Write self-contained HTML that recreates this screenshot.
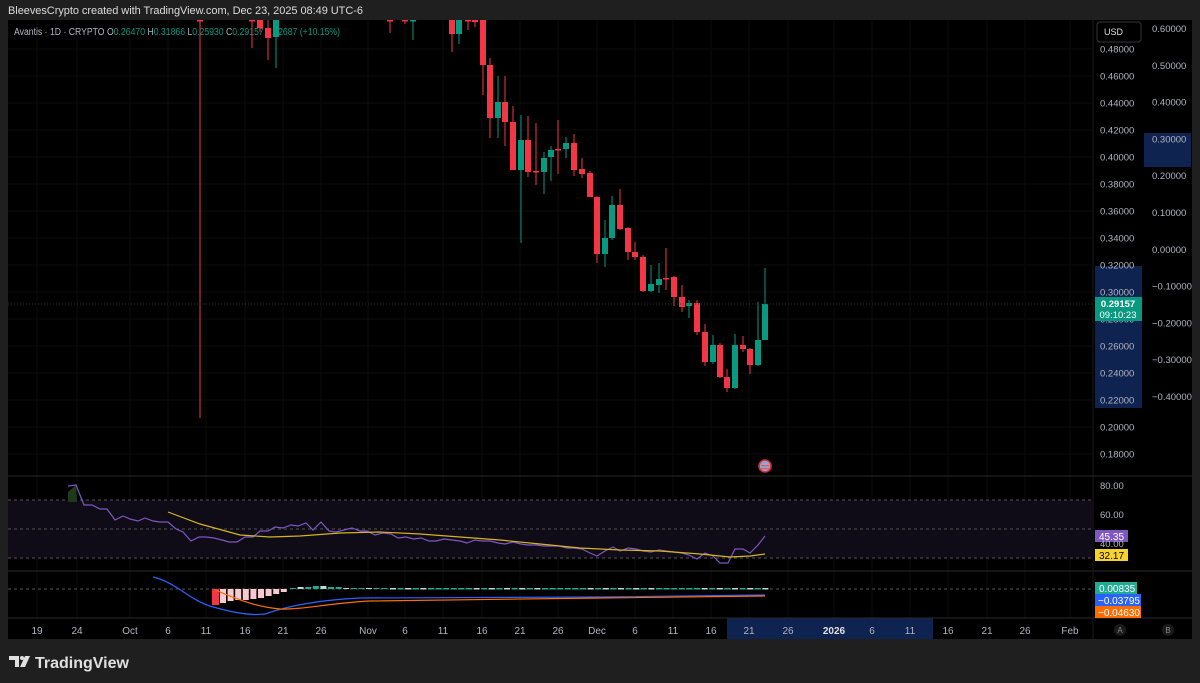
<!DOCTYPE html>
<html><head><meta charset="utf-8"><style>
html,body{margin:0;padding:0;background:#1f1f1f;width:1200px;height:683px;overflow:hidden;font-family:"Liberation Sans",sans-serif}
svg text{font-family:"Liberation Sans",sans-serif}
</style></head><body>
<svg id="s" width="1200" height="683" xmlns="http://www.w3.org/2000/svg">
<rect x="0" y="0" width="1200" height="683" fill="#1f1f1f"/>
<text x="8" y="14" fill="#dcdcdc" font-size="11" textLength="355">BleevesCrypto created with TradingView.com, Dec 23, 2025 08:49 UTC-6</text>
<rect x="8" y="20" width="1184" height="619" fill="#000"/>
<g id="g"></g>
</svg>
<script>
const g=document.getElementById('g');let h='';
function r(x,y,w,hh,f,extra){h+=`<rect x="${x}" y="${y}" width="${w}" height="${hh}" fill="${f}" ${extra||''}/>`}
function l(x1,y1,x2,y2,c,w,extra){h+=`<line x1="${x1}" y1="${y1}" x2="${x2}" y2="${y2}" stroke="${c}" stroke-width="${w||1}" ${extra||''}/>`}
function t(x,y,s,c,fs,anc,extra){h+=`<text x="${x}" y="${y}" fill="${c}" font-size="${fs||10}" text-anchor="${anc||'start'}" ${extra||''}>${s}</text>`}
r(727,618,206,21,'#0e2350');
r(1095,266,47,142,'#0e2350');
r(1144,133,47,34,'#0e2350');
const tx=[[37,'19'],[77,'24'],[130,'Oct'],[168,'6'],[206,'11'],[245,'16'],[283,'21'],[321,'26'],[368,'Nov'],[405,'6'],[443,'11'],[482,'16'],[520,'21'],[558,'26'],[597,'Dec'],[635,'6'],[673,'11'],[711,'16'],[749,'21'],[788,'26'],[834,'2026'],[872,'6'],[910,'11'],[948,'16'],[987,'21'],[1025,'26'],[1070,'Feb']];
tx.forEach(a=>{l(a[0],20,a[0],618,'#0b0b0b',1);t(a[0],634,a[1],a[1]=='2026'?'#e0e0e0':'#b2b5be',10,'middle',a[1]=='2026'?'font-weight="bold"':'')});
for(let i=0;i<16;i++){const p=0.48-0.02*i;const y=49+i*27;l(8,y,1092,y,'#0b0b0b',1);t(1100,y+3.5,p.toFixed(5),'#b2b5be',9.5)}
for(let i=0;i<11;i++){const p=0.6-0.1*i;const y=32+i*36.8;t(1152,y,(p<-0.001?'−':'')+Math.abs(p).toFixed(5),'#b2b5be',9.5)}
r(1097,22,44,20,'#000','stroke="#333" rx="3"');t(1104,35,'USD','#dcdcdc',9);
l(8,476,1192,476,'#2a2a2a',1);l(8,571,1192,571,'#2a2a2a',1);l(8,618,1192,618,'#2a2a2a',1);l(1093,20,1093,639,'#1a1a1a',1);
h+=`<text x="14" y="35" font-size="10" fill="#b2b5be" textLength="326" lengthAdjust="spacingAndGlyphs">Avantis · 1D · CRYPTO <tspan>O</tspan><tspan fill="#089981">0.26470</tspan>  H<tspan fill="#089981">0.31866</tspan>  L<tspan fill="#089981">0.25930</tspan>  C<tspan fill="#089981">0.29157  0.02687 (+10.15%)</tspan></text>`;
const R='#f23645',G='#089981';
const c=[
[200,20,21,20,418],[252,20,21,20,48],[260,20,28,20,32],[268,28,38,20,60],[276,37,20,20,68],
[390,20,21,20,33],[405,20,21,20,24],[413,21,20,20,40],
[452,20,34,20,52],[459,34,20,20,44],[468,20,21,20,30],[475,20,22,20,27],[483,20,65,20,95],
[490,65,118,58,138],[498,118,102,76,138],[505,102,122,76,146],[513,122,170,106,170],[521,170,140,115,243],[528,140,172,116,177],[536,171,172,123,185],[544,172,158,152,194],[551,157,150,146,181],[558,149,149,120,174],[566,149,143,137,158],[574,143,170,134,176],[582,169,174,158,178],[590,173,197,171,197],
[597,197,254,196,263],[605,254,238,220,267],[612,238,205,196,240],[620,205,229,189,230],[628,228,252,227,260],[635,252,257,242,260],[643,257,291,255,292],[651,291,284,265,292],[659,285,279,263,293],[666,278,279,248,290],[674,277,297,276,306],[682,297,307,285,312],[689,306,303,300,318],[697,303,332,300,335],[705,332,362,324,366],[713,362,345,335,364],[720,345,377,343,378],[727,377,388,369,392],[735,388,345,334,389],[743,345,349,336,352],[750,349,365,348,374],[758,365,340,302,366],[765,340,304,268,340]];
c.forEach(k=>{const [x,o,cl,hi,lo]=k;const col=cl<o?G:R;l(x,hi,x,lo,col,1);const top=Math.min(o,cl),bh=Math.max(1.5,Math.abs(cl-o));r(x-3,top,6,bh,col)});
l(8,304,1093,304,'#1e3a35',1,'stroke-dasharray="1 2"');
r(1095,297,47,24,'#089981');t(1118,307,'0.29157','#fff',9.5,'middle','font-weight="bold"');t(1118,318,'09:10:23','#fff',9.5,'middle');
h+=`<circle cx="765" cy="466" r="6" fill="#8fa7d8" stroke="#d32f2f" stroke-width="1.6"/><rect x="761" y="465" width="8" height="1.3" fill="#e55"/><rect x="761" y="468" width="8" height="1.3" fill="#e55"/>`;
r(8,500,1085,58,'#0f0b17');
[500,529,558].forEach(y=>l(8,y,1092,y,'#555',1,'stroke-dasharray="3 3"'));
h+=`<path d="M68,492 L76,485 L77,502 L68,502 Z" fill="#1d3a1d"/>`;
const rsi=[[68,486],[76,485],[84,505],[92,505],[100,509],[107,509],[115,520],[123,516],[130,519],[138,521],[145,518],[153,521],[160,522],[168,522],[176,529],[183,532],[191,541],[199,537],[206,537],[214,538],[222,540],[229,542],[237,542],[245,537],[253,537],[260,531],[268,531],[275,527],[283,528],[291,525],[298,526],[306,523],[313,530],[321,522],[329,531],[336,532],[344,530],[352,528],[360,531],[367,531],[375,535],[383,533],[391,534],[398,538],[406,537],[414,539],[421,538],[429,541],[436,541],[444,539],[452,540],[460,541],[467,543],[475,540],[482,541],[490,541],[498,543],[505,544],[513,542],[521,544],[528,545],[536,545],[544,546],[551,546],[559,546],[567,548],[574,548],[582,549],[590,553],[597,556],[605,551],[613,547],[620,551],[628,548],[636,549],[643,551],[651,552],[659,550],[666,551],[674,552],[682,553],[689,555],[697,559],[705,553],[713,556],[720,563],[728,563],[735,549],[743,549],[750,553],[758,545],[765,536]];
h+=`<polyline points="${rsi.map(p=>p.join(',')).join(' ')}" fill="none" stroke="#7e57c2" stroke-width="1.2"/>`;
h+=`<polyline points="168,512 200,524 240,535 270,537 300,536 340,533 380,532 420,534 460,537 500,540 540,544 580,548 620,550 660,551 700,554 730,557 750,556 765,554" fill="none" stroke="#d4b422" stroke-width="1.2"/>`;
t(1100,489,'80.00','#b2b5be',9.5);t(1100,518,'60.00','#b2b5be',9.5);
r(1095,530,33,12,'#7e57c2');t(1099,540,'45.35','#fff',10);t(1100,547,'40.00','#b2b5be',9.5);
r(1095,549,33,12,'#f7d22c');t(1099,559,'32.17','#000',10);
l(8,589,1092,589,'#555',1,'stroke-dasharray="3 3"');
r(212,589,7,16,'#f23645');
const ph=[14,12,11,11,10,9,7,5,3];ph.forEach((v,i)=>r(220+i*7.6,589,6,v,'#f8c9d0'));
const pos=[1,2,2,3,3,2,2,1,1,1,1,1,1];pos.forEach((v,i)=>r(290+i*7.6,589-v,6,v,i%3==1?'#b2dfdb':'#22ab94'));
for(let x=390;x<766;x+=7.6) r(x,588,6,1.5,(Math.round(x)%3)?'#22ab94':'#b2dfdb');
h+=`<path d="M153,577 C175,582 190,600 210,606 C230,612 250,616 265,614 C290,605 320,600 360,598 L600,597 L765,595" fill="none" stroke="#2962ff" stroke-width="1.2"/>`;
h+=`<path d="M215,590 C235,598 255,607 280,609 C300,610 330,603 370,601 L600,598 L765,596" fill="none" stroke="#ff6d00" stroke-width="1.2"/>`;
r(1095,582,42,12,'#22ab94');t(1099,592,'0.00835','#fff',10);
r(1095,594,46,12,'#2962ff');t(1098,604,'−0.03795','#fff',10);
r(1095,606,46,12,'#ff6d00');t(1098,616,'−0.04630','#fff',10);
h+=`<circle cx="1120" cy="630" r="6" fill="#1a1a1a"/><circle cx="1168" cy="630" r="6" fill="#1a1a1a"/>`;
t(1120,633,'A','#888',8,'middle');t(1168,633,'B','#888',8,'middle');
h+=`<path d="M9,656 h10 v11 h-4 v-7 h-6 z" fill="#e0e0e0"/><circle cx="22" cy="658" r="2" fill="#e0e0e0"/><path d="M25,656 h5 l-5,11 h-5 z" fill="#e0e0e0"/>`;
t(35,668,'TradingView','#e0e0e0',16,'start','font-weight="bold"');
g.innerHTML=h;
</script>
</body></html>
